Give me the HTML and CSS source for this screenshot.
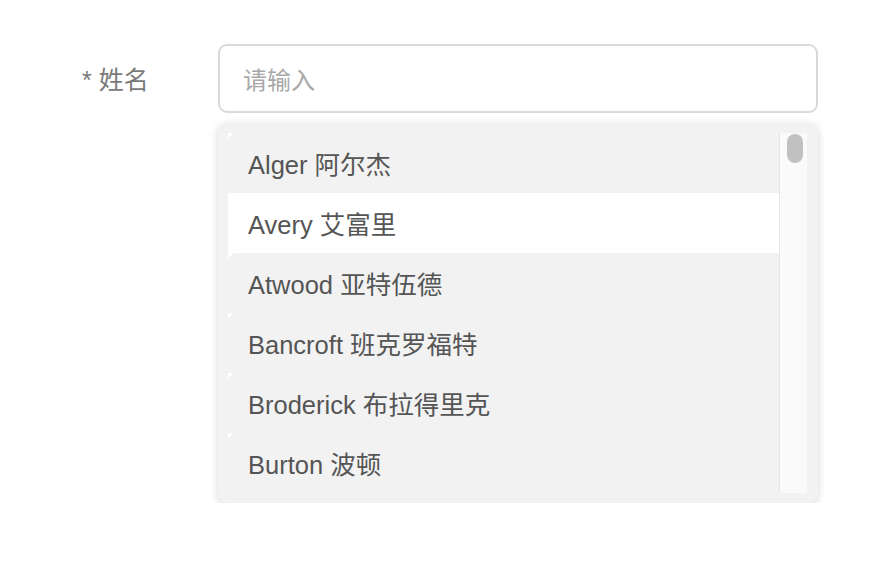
FILE: index.html
```html
<!DOCTYPE html>
<html lang="zh-CN">
<head>
    <meta charset="UTF-8">
    <title>Select</title>
    <link rel="stylesheet" href="styles.css">
</head>
<body>

    <div class="form-row">
        <label class="form-label" for="nameInput">* 姓名</label>
        <div class="form-field">
            <input class="text-input" id="nameInput" type="text" placeholder="请输入">
            <div class="dropdown">
                <ul class="option-list">
                    <li class="option">Alger 阿尔杰</li>
                    <li class="option active">Avery 艾富里</li>
                    <li class="option">Atwood 亚特伍德</li>
                    <li class="option">Bancroft 班克罗福特</li>
                    <li class="option">Broderick 布拉得里克</li>
                    <li class="option">Burton 波顿</li>
                </ul>
                <div class="scroll-track">
                    <div class="scroll-thumb"></div>
                </div>
            </div>
        </div>
    </div>

</body>
</html>
```

FILE: styles.css
```css
* {
    margin: 0;
    padding: 0;
    box-sizing: border-box;
}

body {
    font-family: "Liberation Sans", Arial, "Noto Sans CJK SC", sans-serif;
    background-color: #fff;
    color: #555;
}

.form-row {
    display: flex;
    padding: 44px 0 0 82px;
}

.form-label {
    width: 136px;
    height: 69px;
    padding-top: 4px;
    font-size: 25px;
    line-height: 65px;
    color: #7a7a7a;
}

.form-field {
    width: 600px;
}

.text-input {
    display: block;
    width: 100%;
    height: 69px;
    padding: 4px 23px 0;
    border: 2px solid #dadada;
    border-radius: 9px;
    font-family: inherit;
    font-size: 24px;
    color: #555;
    outline: none;
}

    .text-input::placeholder {
        color: #a8a8a8;
    }

.dropdown {
    display: flex;
    margin-top: 10px;
    padding: 10px 11px 10px 10px;
    background-color: #f2f2f2;
    border-radius: 9px;
    box-shadow: 0 2px 8px rgba(0, 0, 0, 0.16);
}

.option-list {
    flex: 1;
    list-style-type: none;
}

    .option-list .option {
        position: relative;
        height: 60px;
        padding: 5px 0 0 20px;
        line-height: 55px;
        font-size: 25.5px;
        color: #555;
    }

        .option-list .option::before {
            content: "";
            position: absolute;
            top: 0;
            left: 0;
            width: 6px;
            height: 5px;
            background: linear-gradient(135deg, #fff 50%, transparent 50%);
        }

    .option-list .option.active {
        background-color: #fff;
    }

        .option-list .option.active::before {
            display: none;
        }

.scroll-track {
    width: 28px;
    padding: 1px 0 0 7px;
    background-color: #fafafa;
    border-left: 1px solid #e6e6e6;
}

.scroll-thumb {
    width: 16px;
    height: 29px;
    border-radius: 8px;
    background-color: #c1c1c1;
}
```
